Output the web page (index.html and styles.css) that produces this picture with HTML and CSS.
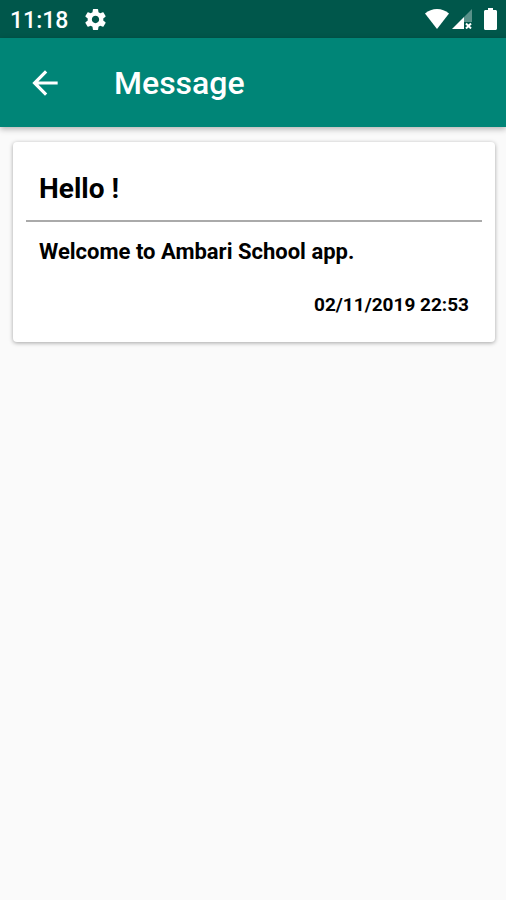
FILE: index.html
```html
<!DOCTYPE html>
<html lang="en">
<head>
    <meta charset="UTF-8">
    <meta name="viewport" content="width=device-width, initial-scale=1.0">
    <title>Message</title>
    <link rel="stylesheet" href="styles.css">
</head>
<body>
    <div class="status-bar">
        <span class="clock">11:18</span>
        <svg class="icon-settings" viewBox="0 0 24 24" aria-hidden="true">
            <path d="M19.43 12.98c.04-.32.07-.64.07-.98s-.03-.66-.07-.98l2.11-1.65c.19-.15.24-.42.12-.64l-2-3.46c-.12-.22-.39-.3-.61-.22l-2.49 1c-.52-.4-1.08-.73-1.69-.98l-.38-2.65C14.46 2.18 14.25 2 14 2h-4c-.25 0-.46.18-.49.42l-.38 2.65c-.61.25-1.17.59-1.69.98l-2.49-1c-.23-.09-.49 0-.61.22l-2 3.46c-.13.22-.07.49.12.64l2.11 1.65c-.04.32-.07.65-.07.98s.03.66.07.98l-2.11 1.65c-.19.15-.24.42-.12.64l2 3.46c.12.22.39.3.61.22l2.49-1c.52.4 1.08.73 1.69.98l.38 2.65c.03.24.24.42.49.42h4c.25 0 .46-.18.49-.42l.38-2.65c.61-.25 1.17-.59 1.69-.98l2.49 1c.23.09.49 0 .61-.22l2-3.46c.12-.22.07-.49-.12-.64l-2.11-1.65zM12 15.5c-1.93 0-3.5-1.57-3.5-3.5s1.57-3.5 3.5-3.5 3.5 1.57 3.5 3.5-1.57 3.5-3.5 3.5z"/>
        </svg>
        <div class="status-icons">
            <svg class="icon-wifi" viewBox="0 0 24 20" aria-hidden="true">
                <path d="M0 4.500C3.500 1.500 7.500 0 12 0s8.500 1.500 12 4.500L12 20z"/>
            </svg>
            <svg class="icon-signal" viewBox="0 0 20 20" aria-hidden="true">
                <path class="signal-empty" d="M20 0v13h-8V8z"/>
                <path d="M0 20L12 8v12z"/>
                <path class="signal-cross" d="M14 14.500l5 5M19 14.500l-5 5"/>
            </svg>
            <svg class="icon-battery" viewBox="0 0 13 22" aria-hidden="true">
                <path d="M4 0h5v2h2.500c.8 0 1.500.7 1.500 1.500v17c0 .8-.7 1.500-1.500 1.500h-10C.7 22 0 21.300 0 20.500v-17C0 2.700.7 2 1.500 2H4z"/>
            </svg>
        </div>
    </div>
    <header class="app-bar">
        <button class="back-button" type="button" aria-label="Back">
            <svg class="icon-back" viewBox="0 0 24 24" aria-hidden="true">
                <path d="M20 11H7.830l5.590-5.590L12 4l-8 8 8 8 1.410-1.410L7.830 13H20v-2z"/>
            </svg>
        </button>
        <h1 class="app-title">Message</h1>
    </header>
    <main class="content">
        <article class="card">
            <h2 class="card-title">Hello !</h2>
            <p class="card-text">Welcome to Ambari School app.</p>
            <time class="card-date" datetime="2019-11-02T22:53">02/11/2019 22:53</time>
        </article>
    </main>
</body>
</html>
```
FILE: styles.css
```css
body {
    font-family: Roboto, sans-serif;
    background-color: #fafafa;
    color: #000;
    margin: 0;
}
svg {
    display: block;
    fill: currentColor;
}
.status-bar {
    display: flex;
    align-items: center;
    height: 38px;
    padding: 0 9px 0 10px;
    background-color: #00574b;
    color: #fff;
}
.clock {
    font-size: 23px;
    font-weight: 500;
    line-height: 36px;
    padding-top: 4px;
}
.icon-settings {
    width: 25px;
    height: 25px;
    margin-left: 15px;
}
.status-icons {
    display: flex;
    align-items: center;
    margin-left: auto;
}
.icon-wifi {
    width: 24px;
    height: 20px;
}
.icon-signal {
    width: 20px;
    height: 20px;
    margin: 0 12px 0 3px;
}
.signal-empty {
    opacity: 0.35;
}
.signal-cross {
    fill: none;
    stroke: currentColor;
    stroke-width: 2;
}
.icon-battery {
    width: 13px;
    height: 22px;
}
.app-bar {
    display: flex;
    align-items: center;
    height: 89px;
    padding-left: 24px;
    background-color: #008577;
    color: #fff;
    box-shadow: 0 2px 6px rgba(0, 0, 0, 0.3);
}
.back-button {
    padding: 2px;
    border: 0;
    background: none;
    color: inherit;
    cursor: pointer;
}
.icon-back {
    width: 38px;
    height: 38px;
}
.app-title {
    margin: 0 0 0 48px;
    font-size: 32px;
    font-weight: 500;
    line-height: 40px;
}
.content {
    padding: 15px 11px 16px 13px;
}
.card {
    padding: 27px 13px 25px;
    border-radius: 4px;
    background-color: #fff;
    box-shadow: 0 1px 4px rgba(0, 0, 0, 0.35);
}
.card-title {
    margin: 0;
    padding: 0 13px 11px;
    border-bottom: 2px solid #aaa;
    font-size: 28px;
    font-weight: 700;
    line-height: 40px;
}
.card-text {
    margin: 0;
    padding: 14px 13px 0;
    font-size: 22px;
    font-weight: 700;
    line-height: 32px;
}
.card-date {
    display: block;
    padding: 25px 13px 0;
    font-size: 19px;
    font-weight: 700;
    line-height: 24px;
    text-align: right;
}
```
